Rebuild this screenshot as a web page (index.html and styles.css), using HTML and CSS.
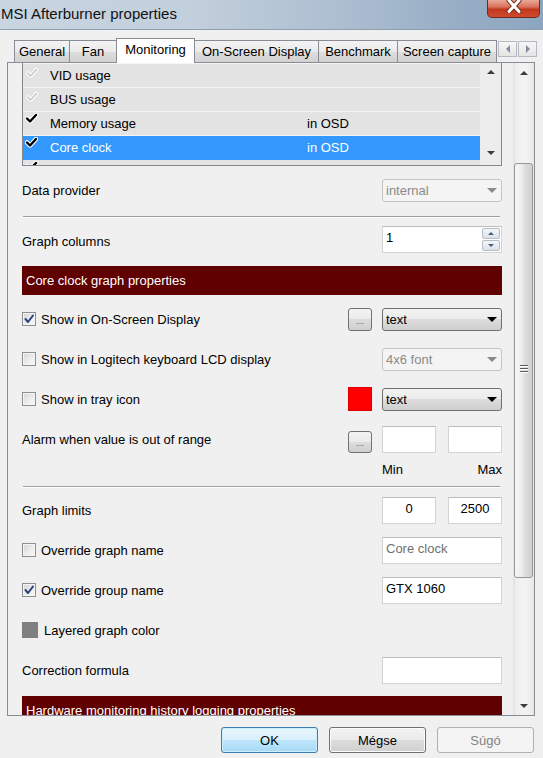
FILE: index.html
```html
<!DOCTYPE html>
<html>
<head>
<meta charset="utf-8">
<title>MSI Afterburner properties</title>
<link rel="stylesheet" href="styles.css">
</head>
<body>
<div class="titlebar">
  <span class="title">MSI Afterburner properties</span>
  <div class="close">
    <svg width="16" height="13" viewBox="0 0 16 13"><path d="M3 0.5 L13 11.5 M13 0.5 L3 11.5" stroke="#7a2a1e" stroke-width="5" stroke-linecap="round"/><path d="M3 0.5 L13 11.5 M13 0.5 L3 11.5" stroke="#ffffff" stroke-width="3" stroke-linecap="round"/></svg>
  </div>
</div>
<div class="tabs">
  <div class="tab t-general">General</div>
  <div class="tab t-fan">Fan</div>
  <div class="tab t-mon active">Monitoring</div>
  <div class="tab t-osd">On-Screen Display</div>
  <div class="tab t-bench">Benchmark</div>
  <div class="tab t-cap">Screen capture</div>
  <div class="tab-arrows">
    <div class="tarrow"><span class="ta-left"></span></div>
    <div class="tarrow"><span class="ta-right"></span></div>
  </div>
</div>
<div class="panel">
  <div class="content">
    <div class="list">
      <div class="list-rows">
        <div class="lrow">
          <svg class="chk g" width="12" height="10" viewBox="0 0 12 10"><path d="M1.5 5 L4.5 8 L10.5 1.5" fill="none" stroke="#ffffff" stroke-width="3.5" stroke-linecap="round" stroke-linejoin="round"/><path d="M1.5 5 L4.5 8 L10.5 1.5" fill="none" stroke="#c9c9c9" stroke-width="1.6" stroke-linecap="round" stroke-linejoin="round"/></svg>
          <span class="lname">VID usage</span>
        </div>
        <div class="lrow">
          <svg class="chk g" width="12" height="10" viewBox="0 0 12 10"><path d="M1.5 5 L4.5 8 L10.5 1.5" fill="none" stroke="#ffffff" stroke-width="3.5" stroke-linecap="round" stroke-linejoin="round"/><path d="M1.5 5 L4.5 8 L10.5 1.5" fill="none" stroke="#c9c9c9" stroke-width="1.6" stroke-linecap="round" stroke-linejoin="round"/></svg>
          <span class="lname">BUS usage</span>
        </div>
        <div class="lrow">
          <svg class="chk" width="13" height="11" viewBox="0 0 13 11"><path d="M2 5.5 L5 8.5 L11 2" fill="none" stroke="#ffffff" stroke-width="4.5" stroke-linecap="round" stroke-linejoin="round"/><path d="M2 5.5 L5 8.5 L11 2" fill="none" stroke="#000000" stroke-width="2.4" stroke-linecap="round" stroke-linejoin="round"/></svg>
          <span class="lname">Memory usage</span>
          <span class="lval">in OSD</span>
        </div>
        <div class="lrow sel">
          <svg class="chk" width="13" height="11" viewBox="0 0 13 11"><path d="M2 5.5 L5 8.5 L11 2" fill="none" stroke="#ffffff" stroke-width="4.5" stroke-linecap="round" stroke-linejoin="round"/><path d="M2 5.5 L5 8.5 L11 2" fill="none" stroke="#000000" stroke-width="2.4" stroke-linecap="round" stroke-linejoin="round"/></svg>
          <span class="lname">Core clock</span>
          <span class="lval">in OSD</span>
        </div>
        <div class="lrow part">
          <svg class="chk" width="13" height="11" viewBox="0 0 13 11"><path d="M2 5.5 L5 8.5 L11 2" fill="none" stroke="#ffffff" stroke-width="4.5" stroke-linecap="round" stroke-linejoin="round"/><path d="M2 5.5 L5 8.5 L11 2" fill="none" stroke="#000000" stroke-width="2.4" stroke-linecap="round" stroke-linejoin="round"/></svg>
        </div>
      </div>
      <div class="list-sb">
        <span class="tri up dark"></span>
        <span class="tri down dark"></span>
      </div>
    </div>

    <div class="row r-data">
      <span class="lbl">Data provider</span>
      <div class="select dis"><span>internal</span><span class="tri down gray"></span></div>
    </div>

    <div class="sep s1"></div>

    <div class="row r-cols">
      <span class="lbl low">Graph columns</span>
      <div class="spin">
        <span class="spin-val">1</span>
        <div class="spin-btns">
          <span class="sbtn"><span class="tri up tiny"></span></span>
          <span class="sbtn"><span class="tri down tiny"></span></span>
        </div>
      </div>
    </div>

    <div class="hdr h1">Core clock graph properties</div>

    <div class="row r-first">
      <span class="cb on"><svg width="12" height="12" viewBox="0 0 12 12"><path d="M2.5 6 L5 9 L10 2.5" fill="none" stroke="#27427a" stroke-width="2" stroke-linecap="round" stroke-linejoin="round"/></svg></span>
      <span class="lbl">Show in On-Screen Display</span>
      <div class="dots">...</div>
      <div class="select"><span>text</span><span class="tri down black"></span></div>
    </div>

    <div class="row">
      <span class="cb"></span>
      <span class="lbl">Show in Logitech keyboard LCD display</span>
      <div class="select dis"><span>4x6 font</span><span class="tri down gray"></span></div>
    </div>

    <div class="row">
      <span class="cb"></span>
      <span class="lbl">Show in tray icon</span>
      <div class="swatch red"></div>
      <div class="select"><span>text</span><span class="tri down black"></span></div>
    </div>

    <div class="row">
      <span class="lbl">Alarm when value is out of range</span>
      <div class="dots low">...</div>
      <div class="pair"><span class="inp half"></span><span class="inp half"></span></div>
    </div>

    <div class="minmax"><span>Min</span><span>Max</span></div>

    <div class="sep s2"></div>

    <div class="row r-limits">
      <span class="lbl">Graph limits</span>
      <div class="pair"><span class="inp half ctr">0</span><span class="inp half ctr">2500</span></div>
    </div>

    <div class="row">
      <span class="cb"></span>
      <span class="lbl">Override graph name</span>
      <span class="inp wide muted">Core clock</span>
    </div>

    <div class="row">
      <span class="cb on"><svg width="12" height="12" viewBox="0 0 12 12"><path d="M2.5 6 L5 9 L10 2.5" fill="none" stroke="#27427a" stroke-width="2" stroke-linecap="round" stroke-linejoin="round"/></svg></span>
      <span class="lbl">Override group name</span>
      <span class="inp wide">GTX 1060</span>
    </div>

    <div class="row">
      <span class="swatch grey"></span>
      <span class="lbl">Layered graph color</span>
    </div>

    <div class="row">
      <span class="lbl">Correction formula</span>
      <span class="inp wide"></span>
    </div>

    <div class="hdr h2">Hardware monitoring history logging properties</div>
  </div>
  <div class="vscroll">
    <div class="sb-btn"><span class="tri up dark"></span></div>
    <div class="sb-track">
      <div class="thumb"><span class="grip"></span></div>
    </div>
    <div class="sb-btn"><span class="tri down dark"></span></div>
  </div>
</div>
<div class="buttons">
  <div class="btn default">OK</div>
  <div class="btn">Mégse</div>
  <div class="btn disabled">Súgó</div>
</div>
</body>
</html>
```

FILE: styles.css
```css
* { box-sizing: border-box; }
html, body { margin: 0; padding: 0; }
body {
  width: 543px;
  height: 758px;
  overflow: hidden;
  background: #f0f0f0;
  font-family: "Liberation Sans", Arial, sans-serif;
  font-size: 13px;
  color: #000;
}

/* title bar */
.titlebar {
  height: 30px;
  display: flex;
  justify-content: space-between;
  align-items: flex-start;
  background: linear-gradient(to right, #c9d5e1 0%, #c2cfdc 35%, #afc0d2 60%, #97adc5 85%, #8da6bf 100%);
  border-bottom: 1px solid #8e9fb2;
}
.title {
  font-size: 15px;
  line-height: 17px;
  margin-top: 5px;
  padding-left: 1px;
  color: #111;
}
.close {
  width: 53px;
  height: 18px;
  margin-right: 3px;
  border: 1px solid #6e2a20;
  border-top: 0;
  border-radius: 0 0 5px 5px;
  background: linear-gradient(#e9a896 0%, #d8735e 40%, #c2381f 55%, #cf4a2e 100%);
  display: flex;
  justify-content: center;
  align-items: flex-start;
}

/* tabs */
.tabs {
  height: 32px;
  display: flex;
  align-items: flex-end;
  padding-left: 14px;
}
.tab {
  height: 22px;
  border: 1px solid #898c95;
  border-bottom: 0;
  background: linear-gradient(#f3f3f3 0%, #ebebeb 50%, #dedede 50%, #d2d2d2 100%);
  display: flex;
  align-items: center;
  justify-content: center;
  padding-bottom: 1px;
  white-space: nowrap;
}
.t-general { width: 56px; }
.t-fan { width: 48px; margin-left: -1px; }
.t-mon { width: 79px; margin-left: -1px; }
.t-osd { width: 125px; margin-left: -1px; }
.t-bench { width: 80px; margin-left: -1px; }
.t-cap { width: 100px; margin-left: -1px; }
.tab.active {
  height: 25px;
  margin-bottom: -1px;
  background: #ffffff;
  position: relative;
  z-index: 1;
  padding-bottom: 4px;
}
.tab-arrows {
  align-self: flex-start;
  margin-top: 11px;
  margin-left: 1px;
  display: flex;
  gap: 1px;
}
.tarrow {
  width: 19px;
  height: 16px;
  border: 1px solid #b5b9c0;
  background: linear-gradient(#f7f7f7, #e4e4e4);
  display: flex;
  align-items: center;
  justify-content: center;
}
.ta-left {
  width: 0; height: 0;
  border-top: 4px solid transparent;
  border-bottom: 4px solid transparent;
  border-right: 4px solid #7d8ca1;
}
.ta-right {
  width: 0; height: 0;
  border-top: 4px solid transparent;
  border-bottom: 4px solid transparent;
  border-left: 4px solid #7d8ca1;
}

/* panel */
.panel {
  margin-left: 7px;
  width: 528px;
  height: 654px;
  border: 1px solid #898c95;
  display: flex;
  background: #f0f0f0;
}
.content {
  width: 505px;
  height: 652px;
  overflow: hidden;
  padding: 0 11px 0 14px;
}

/* monitored list */
.list {
  height: 103px;
  border: 1px solid #828790;
  border-top: 0;
  display: flex;
}
.list-rows {
  flex: 1;
  padding-top: 1px;
  background: #f6f6f6;
}
.lrow {
  height: 24px;
  border-bottom: 1px solid #f6f6f6;
  background: #e3e3e3;
  display: flex;
  align-items: flex-start;
}
.lrow.sel {
  background: #3399ff;
  color: #fff;
  border-bottom-color: #3399ff;
}
.lrow.part {
  height: 5px;
  border-bottom: 0;
  overflow: hidden;
}
.chk {
  flex: none;
  margin-left: 2px;
  margin-top: 1px;
}
.chk.g { margin-top: 4px; margin-left: 3px; }
.lname {
  width: 257px;
  margin-left: 12px;
  line-height: 23px;
  white-space: nowrap;
}
.chk.g + .lname { margin-left: 12px; }
.lval {
  line-height: 23px;
}
.list-sb {
  width: 21px;
  background: #ededed;
  display: flex;
  flex-direction: column;
  align-items: center;
  justify-content: space-between;
  padding: 7px 0 10px 0;
}

/* triangles */
.tri {
  width: 0;
  height: 0;
  border-left: 4px solid transparent;
  border-right: 4px solid transparent;
}
.tri.up { border-bottom: 4px solid #404040; }
.tri.down { border-top: 4px solid #404040; }
.tri.dark.up { border-bottom-color: #3c3c3c; }
.tri.dark.down { border-top-color: #3c3c3c; }
.tri.black { border-left-width: 5px; border-right-width: 5px; border-top: 5px solid #000; }
.tri.gray { border-left-width: 5px; border-right-width: 5px; border-top: 5px solid #8a8a8a; }
.tri.tiny { border-left-width: 3px; border-right-width: 3px; }
.tri.tiny.up { border-bottom: 3px solid #4a5d80; }
.tri.tiny.down { border-top: 3px solid #4a5d80; }

/* rows */
.row {
  display: flex;
  align-items: center;
  height: 40px;
}
.r-data { margin-top: 4px; }
.r-cols { margin-top: 1px; }
.r-first { margin-top: 4px; }
.r-limits { margin-top: 2px; }
.lbl {
  flex: 1;
  white-space: nowrap;
  padding-top: 1px;
}
.lbl.low { padding-top: 5px; }

.sep {
  height: 2px;
  border-top: 1px solid #a0a0a0;
  border-bottom: 1px solid #ffffff;
  margin: 0 2px 0 1px;
}
.s1 { margin-top: 6px; }
.s2 { margin-top: 7px; }

.hdr {
  height: 29px;
  background: #600000;
  color: #fff;
  line-height: 29px;
  padding-left: 4px;
  white-space: nowrap;
}
.h1 { margin-top: 7px; }
.h2 { margin-top: 6px; }

/* controls */
.select {
  width: 120px;
  height: 23px;
  border: 1px solid #707070;
  border-radius: 3px;
  background: linear-gradient(#f2f2f2 0%, #ebebeb 49%, #dddddd 50%, #cfcfcf 100%);
  display: flex;
  align-items: center;
  justify-content: space-between;
  padding: 0 4px 0 3px;
}
.select.dis {
  border-color: #c2c4c7;
  background: #f4f4f4;
  color: #8a8a8a;
}
.dots {
  width: 24px;
  height: 23px;
  margin-right: 10px;
  border: 1px solid #707070;
  border-radius: 3px;
  background: linear-gradient(#f2f2f2 0%, #ebebeb 49%, #dddddd 50%, #cfcfcf 100%);
  font-size: 9px;
  line-height: 9px;
  color: #555;
  display: flex;
  justify-content: center;
  align-items: flex-end;
  padding-bottom: 4px;
}
.dots.low { height: 22px; margin-top: 5px; }
.swatch.red {
  width: 24px;
  height: 24px;
  margin-right: 10px;
  background: #ff0000;
  border: 1px solid #e00000;
}
.swatch.grey {
  width: 16px;
  height: 16px;
  margin-right: 6px;
  background: #808080;
}
.cb {
  width: 14px;
  height: 14px;
  margin-right: 5px;
  border: 1px solid #8e8f8f;
  background: linear-gradient(135deg, #d4d4d4 0%, #ebebeb 50%, #fbfbfb 100%);
  box-shadow: inset 0 0 0 1px #f4f4f4;
  display: flex;
  align-items: center;
  justify-content: center;
}
.cb svg { display: block; }

.inp {
  height: 27px;
  background: #ffffff;
  border: 1px solid #d2d4d8;
  border-top-color: #b9bcc2;
  padding: 3px 0 0 3px;
  line-height: 15px;
  white-space: nowrap;
}
.inp.wide { width: 120px; }
.inp.half { width: 54px; }
.inp.ctr { text-align: center; padding-left: 0; }
.inp.muted { color: #6f6f6f; }
.pair {
  width: 120px;
  display: flex;
  justify-content: space-between;
}

.spin {
  width: 120px;
  height: 27px;
  background: #fff;
  border: 1px solid #d2d4d8;
  border-top-color: #b9bcc2;
  display: flex;
  justify-content: space-between;
  padding: 0 1px 0 3px;
}
.spin-val { line-height: 15px; padding-top: 3px; }
.spin-btns {
  width: 18px;
  display: flex;
  flex-direction: column;
  padding: 1px 0;
  gap: 1px;
}
.sbtn {
  flex: 1;
  border: 1px solid #b6bcc6;
  border-radius: 2px;
  background: linear-gradient(#f3f6f9, #dbe2ea);
  display: flex;
  align-items: center;
  justify-content: center;
}

.minmax {
  width: 120px;
  height: 20px;
  margin-left: auto;
  display: flex;
  justify-content: space-between;
  align-items: center;
  padding-right: 0;
}

/* main scrollbar */
.vscroll {
  width: 21px;
  display: flex;
  flex-direction: column;
  background: linear-gradient(to right, #e1e1e1 0%, #eeeeee 15%, #f3f3f3 50%, #eeeeee 85%, #e6e6e6 100%);
}
.sb-btn {
  height: 19px;
  display: flex;
  align-items: center;
  justify-content: center;
}
.sb-track {
  flex: 1;
  padding: 81px 1px 0 1px;
}
.thumb {
  height: 415px;
  border: 1px solid #979797;
  border-radius: 3px;
  background: linear-gradient(to right, #f7f7f7 0%, #ececec 40%, #dcdcdc 60%, #d1d1d1 100%);
  display: flex;
  align-items: center;
  justify-content: center;
}
.grip {
  width: 8px;
  height: 8px;
  margin-top: -4px;
  background: repeating-linear-gradient(#5a5a5a 0, #5a5a5a 1px, #ffffff 1px, #ffffff 2px, transparent 2px, transparent 3px);
}

/* bottom buttons */
.buttons {
  display: flex;
  justify-content: flex-end;
  gap: 11px;
  padding-right: 9px;
  margin-top: 11px;
}
.btn {
  width: 97px;
  height: 26px;
  border: 1px solid #707070;
  border-radius: 3px;
  background: linear-gradient(#f2f2f2 0%, #ebebeb 49%, #dddddd 50%, #cfcfcf 100%);
  box-shadow: inset 0 0 0 1px #fcfcfc;
  display: flex;
  align-items: center;
  justify-content: center;
}
.btn.default {
  border-color: #3c7fb1;
  background: linear-gradient(#e8f5fc 0%, #d9f0fc 49%, #bee6fd 50%, #a7d9f5 100%);
  box-shadow: inset 0 0 0 1px #cdeefc;
}
.btn.disabled {
  border-color: #adb2b5;
  background: #f4f4f4;
  box-shadow: none;
  color: #838383;
}
```
